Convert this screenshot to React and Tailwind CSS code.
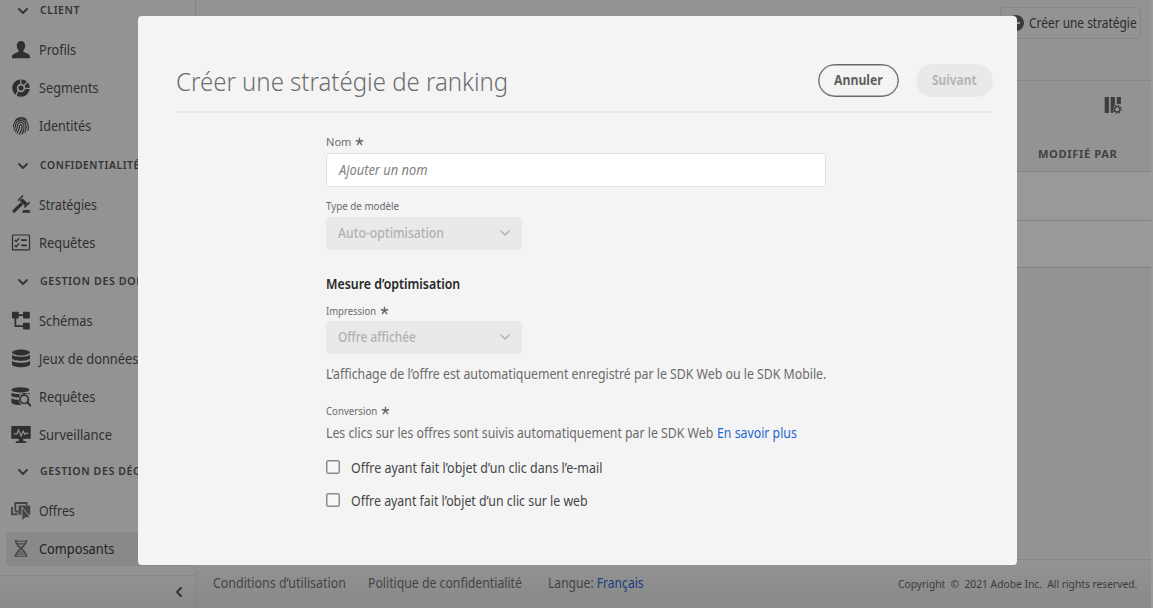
import { useLayoutEffect, useRef, useState } from "react";
import { ChevronDown, ChevronLeft } from "lucide-react";

/* One line of text set to a fixed measure. */
function Line({ w, className = "", children }) {
  const ref = useRef(null);
  const [scale, setScale] = useState(1);
  useLayoutEffect(() => {
    if (ref.current) setScale(w / ref.current.offsetWidth);
  }, [w]);
  return (
    <span className={"inline-block shrink-0 whitespace-nowrap " + className} style={{ width: w }}>
      <span ref={ref} className="inline-block origin-left" style={{ transform: `scaleX(${scale})` }}>
        {children}
      </span>
    </span>
  );
}

const Svg = ({ children }) => (
  <svg viewBox="0 0 20 20" className="h-5 w-5 shrink-0" fill="currentColor">{children}</svg>
);

const icons = {
  profile: (
    <Svg><path d="M10 1c-2.6 0-4.2 1.800-4.2 4.500 0 2 .7 3.500 1.700 4.600.5.8.3 1.600-.5 2L2.800 13.900C1.500 14.600 1 15.700 1 17v1.300h18V17c0-1.300-.6-2.400-1.800-3.100L13 12.100c-.8-.4-1-1.200-.5-2 1-1.100 1.700-2.600 1.700-4.600C14.200 2.800 12.600 1 10 1z" /></Svg>
  ),
  segments: (
    <Svg>
      <circle cx="10" cy="10" r="6.500" fill="none" stroke="currentColor" strokeWidth="4.600" />
      <circle cx="10" cy="10" r="2.500" />
      <path d="M7.800 10.800 4.600 18.500M9.800 6.500V.5M12.500 8l5-5.200M13.500 10.400h6" stroke="#939393" strokeWidth="1.200" />
    </Svg>
  ),
  identity: (
    <Svg>
      <g fill="none" stroke="currentColor" strokeWidth="1.100" strokeLinecap="round">
        <path d="M4.500 4.300C7.500.9 12.500.7 15.500 3.800" />
        <path d="M2.300 11c.5-1.500.3-3 1.200-4.600 2.600-4.700 10-4.700 12.700 0 1.200 2.200 1.500 5 .9 8" />
        <path d="M3 13.800c1.600-1.800 1.300-3.600 1.700-5.400C5.900 3.600 13 3.300 14.700 8c.8 2.500.5 5.800-.7 8.600" />
        <path d="M4.300 15.600c2.300-2.200 2-4.500 2.300-6.600.6-3.200 5.500-3.500 6.300 0 .6 2.900-.1 6.200-1.700 8.900" />
        <path d="M5.900 17.100c2.100-2.100 2.500-4.700 2.700-7.400.2-1.500 2.200-1.500 2.400 0 .3 3-.8 6-2.900 8.700" />
      </g>
    </Svg>
  ),
  policy: (
    <Svg>
      <path d="M9.800 7.200 1.900 15a1.500 1.500 0 0 0 2.200 2.300l8-7.900z" />
      <path d="m11.300 3.500 5.200 5.200-2.700 2.600-5.200-5.100z" transform="translate(.3 -.3) scale(.98)" />
      <path d="m7.600 5.100 4-4.200M13.800 11.900l4.400-4.300" fill="none" stroke="currentColor" strokeWidth="1.500" strokeLinecap="round" />
      <path d="M12.300 15h6l1.300 2.800h-8.700z" />
    </Svg>
  ),
  checklist: (
    <Svg>
      <rect x="1.500" y="2" width="17" height="14.800" rx=".6" fill="none" stroke="currentColor" strokeWidth="1.200" />
      <path d="m3.600 6.900 1.600 1.600 3-3.400M3.600 12.300l1.600 1.500 3-3.400" fill="none" stroke="currentColor" strokeWidth="1.300" />
      <path d="M10.200 6.200h5.600v1.700h-5.600zM10.200 11.500h5.600v1.700h-5.600z" />
    </Svg>
  ),
  schema: (
    <Svg>
      <rect x="1" y=".7" width="6.800" height="6.800" rx="1" /><rect x="12" y=".7" width="6.800" height="6.800" rx="1" />
      <rect x="12" y="11.700" width="6.800" height="6.800" rx="1" />
      <path d="M7 4.100h6M4.400 7v8.100H13" fill="none" stroke="currentColor" strokeWidth="1.700" />
    </Svg>
  ),
  data: (
    <Svg>
      <ellipse cx="10" cy="3.500" rx="9" ry="2.900" />
      <path d="M1 5.700c2 2.600 16 2.600 18 0V9.500c-1.500 3-16.500 3-18 0zM1 11.800c2 2.700 16 2.700 18 0v3.900c-1.500 3.300-16.500 3.300-18 0z" />
    </Svg>
  ),
  query: (
    <Svg>
      <ellipse cx="9.400" cy="2.900" rx="9" ry="2.600" />
      <path d="M.4 5.400c2 2.300 16 2.300 18 0v2.200c-5-3.400-9.800-1-10.600 2.800-3.600-.1-6.800-.7-7.400-1.700zM.4 11.200c1.600 1.100 4.200 1.500 7.300 1.600.2 2.200 1.200 3.900 3 5C5.500 18.300.9 17.600.4 15.600z" />
      <circle cx="13.200" cy="12.300" r="4.200" fill="none" stroke="currentColor" strokeWidth="1.700" />
      <path d="m16.200 15.300 3.400 3.500" stroke="currentColor" strokeWidth="2" strokeLinecap="round" />
    </Svg>
  ),
  monitor: (
    <Svg>
      <path d="M.3 1h19.400v12.800h-7.400v2.500h2.200c.6 0 .9.600.9 1.700H4.600c0-1.100.3-1.700.9-1.700h2.200v-2.500H.3z" />
      <path d="M2.800 8.800h3L7.600 5l2.500 6 2-4.900 1.800 3.200 1-1h2.400" fill="none" stroke="#939393" strokeWidth="1.200" />
    </Svg>
  ),
  offers: (
    <Svg>
      <g fill="#444" stroke="#444">
        <path d="M7.500 4.500h11.700v9.200H7.500z" stroke="none" />
        <path d="M4.300 2.500V10.500M1 5.800v7.500h5.500M4.300 10.500h3M3.500 2h12v2" fill="none" strokeWidth="1.900" />
        <path d="M10.900 6v14l3.200-3.300h5.400z" stroke="#939393" strokeWidth="1" />
      </g>
    </Svg>
  ),
  dna: (
    <Svg>
      <g fill="none" stroke="#474747">
        <path d="M4.500 1c0 3.800 2.200 5.700 5.500 8.300s5.500 4.600 5.500 8.700M15.500 1c0 3.800-2.200 5.700-5.500 8.300S4.500 13.900 4.500 18" strokeWidth="1.700" />
        <path d="M5 2.300h10M6 4.900h8M7.500 13h5M6 15h8M5 17.300h10" strokeWidth="1.100" />
      </g>
    </Svg>
  ),
};

function Section({ label, w, className }) {
  return (
    <div className={"flex shrink-0 items-center pl-[15px] " + className}>
      <ChevronDown className="h-4 w-4 shrink-0 text-[#383838]" strokeWidth={3} />
      <Line w={w} className="ml-[9px] text-[10.5px] font-semibold tracking-[.6px] text-[#343434]">{label}</Line>
    </div>
  );
}

function Item({ icon, label, w, active }) {
  return (
    <div className="flex h-[38.1px] shrink-0 items-center pl-1.5">
      <div className={"flex h-[34px] w-full items-center rounded pl-[5px] " + (active ? "bg-[#898989] text-[#222]" : "text-[#2f2f2f]")}>
        {icons[icon]}
        <Line w={w} className="ml-2 text-sm font-[450]">{label}</Line>
      </div>
    </div>
  );
}

function Star() {
  return (
    <svg viewBox="0 0 10 10" className="mb-px ml-[4px] h-[9px] w-[9px]" stroke="#666" strokeWidth="1.500">
      <path d="M5 .7V5M5 5 .9 3.900M5 5l4.100-1.100M5 5 2.300 9M5 5l2.700 4" />
    </svg>
  );
}

function Select({ label, w }) {
  return (
    <div className="flex h-[33px] w-[196px] shrink-0 items-center justify-between rounded bg-[#e9e9e9] pb-px pl-3 pr-[9px] text-[#b1b1b1]">
      <Line w={w} className="text-sm font-medium">{label}</Line>
      <ChevronDown className="h-4 w-4" strokeWidth={2.300} />
    </div>
  );
}

function Check({ label, w }) {
  return (
    <div className="flex h-[33px] items-center">
      <span className="mb-[3px] h-[14px] w-[14px] rounded-[2px] border-[1.500px] border-[#8a8a8a] bg-[#f8f8f8] shadow-[inset_0_0_0_0.500px_#8a8a8a]" />
      <Line w={w} className="ml-[10.500px] pb-px text-sm font-[450] text-[#464646]">{label}</Line>
    </div>
  );
}

function Sidebar() {
  return (
    <nav className="flex w-[196px] shrink-0 flex-col border-r border-[#868686]">
      <Section label="CLIENT" w={40} className="h-[31px] pb-[10px]" />
      <Item icon="profile" label="Profils" w={37} />
      <Item icon="segments" label="Segments" w={60} />
      <Item icon="identity" label="Identités" w={52} />
      <Section label="CONFIDENTIALITÉ" w={100} className="h-[40.700px]" />
      <Item icon="policy" label="Stratégies" w={58} />
      <Item icon="checklist" label="Requêtes" w={56} />
      <Section label="GESTION DES DONNÉES" w={134} className="h-[39.800px] pb-px" />
      <Item icon="schema" label="Schémas" w={54} />
      <Item icon="data" label="Jeux de données" w={99} />
      <Item icon="query" label="Requêtes" w={56} />
      <Item icon="monitor" label="Surveillance" w={73} />
      <Section label="GESTION DES DÉCISIONS" w={140} className="h-[37.200px] pb-[2px]" />
      <Item icon="offers" label="Offres" w={36} />
      <Item icon="dna" label="Composants" w={75} active />
      <div className="mt-auto flex h-[33px] items-center justify-end border-t border-[#868686] bg-linear-to-b from-[#939393] to-[#898989] pr-2">
        <ChevronLeft className="h-4 w-4 text-[#333]" strokeWidth={3} />
      </div>
    </nav>
  );
}

function Page() {
  return (
    <main className="flex min-w-0 flex-1 flex-col border-r-2 border-[#9a9a9a]">
      <div className="flex h-[81px] justify-end border-b border-[#868686] pr-[10px] pt-[7px]">
        <div className="flex h-8 w-[141px] items-center rounded border border-[#868686] pl-[7px] text-[#2b2b2b]">
          <svg viewBox="0 0 16 16" className="h-4 w-4" fill="#3a3a3a"><circle cx="8" cy="8" r="8" /><path d="M8 4v8M4 8h8" stroke="#999" strokeWidth="2" /></svg>
          <Line w={108} className="ml-[5px] text-sm font-[450]">Créer une stratégie</Line>
        </div>
      </div>
      <div className="flex h-12 items-center justify-end pr-[29px]">
        <svg viewBox="0 0 18 18" className="h-[18px] w-[18px]" fill="#3d3d3d">
          <path d="M.7 1h4.200v16H.7zM6.700 1h4.200v7L9.500 11v2l-2.800 3zM7 14h2v3H7zM12.700 1h4.200v7.200l-4.200-.4z" />
          <circle cx="13.200" cy="13.300" r="2.700" fill="none" stroke="#3d3d3d" strokeWidth="1.300" />
          <circle cx="13.200" cy="13.300" r="3.900" fill="none" stroke="#3d3d3d" strokeWidth="1.500" strokeDasharray="1.400 1.663" />
        </svg>
      </div>
      <div className="flex h-[43px] items-center justify-end border-b border-[#838383] pr-[34px] pt-[8px]">
        <Line w={79} className="text-[11px] font-bold tracking-[.6px] text-[#414141]">MODIFIÉ PAR</Line>
      </div>
      <div className="h-[49px] border-b border-[#838383] bg-[#999]" />
      <div className="h-[47px] border-b border-[#838383] bg-[#999]" />
      <footer className="mt-auto flex h-[49px] items-center justify-between border-t border-[#888] bg-linear-to-b from-[#939393] to-[#898989] pb-0.5 pl-[17px] pr-[14px] text-sm text-[#444]">
        <div className="flex">
          <Line w={133}>Conditions d’utilisation</Line>
          <Line w={154} className="ml-[22px]">Politique de confidentialité</Line>
          <Line w={96} className="ml-[26px]">Langue: <span className="text-[#173c80]">Français</span></Line>
        </div>
        <Line w={239} className="pt-0.5 text-[11.500px] text-[#3b3b3b]">Copyright&nbsp; ©&nbsp; 2021 Adobe Inc.&nbsp; All rights reserved.</Line>
      </footer>
    </main>
  );
}

function Dialog() {
  return (
    <div className="absolute left-[138px] top-[16px] flex h-[549px] w-[879px] flex-col rounded bg-[#f4f4f4] pl-[38px] pr-6 text-[#6b6b6b]">
      <header className="flex h-[97px] shrink-0 items-center border-b-2 border-[#e9e9e9] pt-[34px]">
        <Line w={332} className="pt-px text-[26px] font-light text-[#6e6e6e]">Créer une stratégie de ranking</Line>
        <button className="ml-auto flex h-[33px] w-[81px] items-center justify-center rounded-full border-[1.500px] border-[#696969] pb-px text-[#5f5f5f] shadow-[inset_0_0_0_0.500px_#696969]">
          <Line w={49} className="text-sm font-bold">Annuler</Line>
        </button>
        <button className="ml-[17px] flex h-[33px] w-[77px] items-center justify-center rounded-full bg-[#e9e9e9] pb-px text-[#b5b5b5]">
          <Line w={45} className="text-sm font-bold">Suivant</Line>
        </button>
      </header>
      <div className="ml-[150px] flex w-[502px] flex-col">
        <div className="mt-[18px] flex h-[22px] items-center text-[11.500px]"><Line w={25}>Nom</Line><Star /></div>
        <div className="flex h-[34px] w-[500px] shrink-0 items-center rounded border border-[#e2e2e2] bg-white pl-3 text-[#818181]">
          <Line w={88} className="text-sm font-[450] italic">Ajouter un nom</Line>
        </div>
        <div className="mt-[9px] flex h-[21px] items-center text-[11px]"><Line w={73}>Type de modèle</Line></div>
        <Select label="Auto-optimisation" w={106} />
        <div className="mt-[22px] flex h-6 items-center text-sm font-semibold text-[#282828]"><Line w={134}>Mesure d’optimisation</Line></div>
        <div className="mt-[5px] flex h-5 items-center text-[11px]"><Line w={50}>Impression</Line><Star /></div>
        <Select label="Offre affichée" w={78} />
        <div className="mt-[7.500px] flex h-6 items-center text-sm font-[450]"><Line w={500}>L’affichage de l’offre est automatiquement enregistré par le SDK Web ou le SDK Mobile.</Line></div>
        <div className="mt-[15.500px] flex h-5 items-center text-[11px]"><Line w={51}>Conversion</Line><Star /></div>
        <div className="flex h-6 items-center text-sm font-[450]">
          <Line w={387}>Les clics sur les offres sont suivis automatiquement par le SDK Web</Line>
          <Line w={80} className="ml-1 text-[#1b68d3]">En savoir plus</Line>
        </div>
        <div className="mt-[7px]">
          <Check label="Offre ayant fait l’objet d’un clic dans l’e-mail" w={251} />
          <Check label="Offre ayant fait l’objet d’un clic sur le web" w={237} />
        </div>
      </div>
    </div>
  );
}

export default function App() {
  return (
    <div className="relative flex h-[608px] w-[1153px] overflow-hidden bg-[#939393] font-['Noto_Sans',sans-serif]">
      <Sidebar />
      <Page />
      <Dialog />
    </div>
  );
}
